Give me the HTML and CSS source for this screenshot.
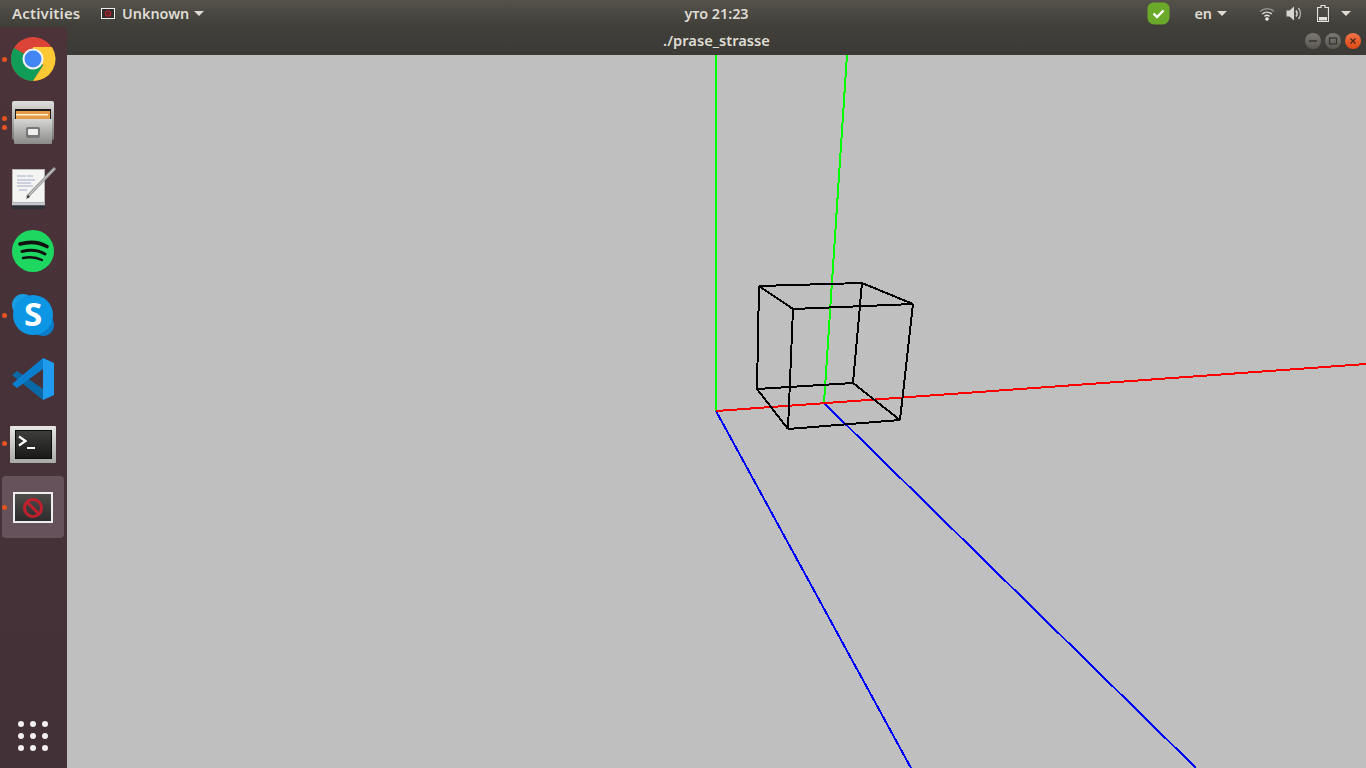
FILE: index.html
```html
<!DOCTYPE html>
<html lang="en">

<head>
    <meta charset="UTF-8">
    <meta name="viewport" content="width=device-width, initial-scale=1.0">
    <title>./prase_strasse</title>
    <link rel="stylesheet" href="styles.css">
</head>

<body>
    <header class="topbar">
        <div class="topbar-left">
            <span class="activities">Activities</span>
            <div class="app-menu">
                <svg class="app-menu-icon" width="14" height="11" viewBox="0 0 14 11">
                    <rect x="0.5" y="0.5" width="13" height="10" fill="#2e2c2c" stroke="#eee"/>
                    <circle cx="7" cy="5.5" r="2.6" fill="none" stroke="#b3202c" stroke-width="1.3"/>
                    <path d="M5.2 3.7l3.6 3.6" stroke="#b3202c" stroke-width="1"/>
                </svg>
                <span>Unknown</span>
                <span class="caret"></span>
            </div>
        </div>
        <div class="clock">уто 21:23</div>
        <div class="topbar-right">
            <svg class="tray-check" width="23" height="23" viewBox="0 0 23 23">
                <path d="M7 0.5h9c4 0 6.5 2.5 6.5 6v8c0 5-3 8-7.500 8h-7c-5 0-7.500-3-7.500-7v-9c0-3.500 3-6 6.500-6z" fill="#6aa92a"/>
                <path d="M6.500 11.500l3.500 3.500 6.500-6.500" fill="none" stroke="#fff" stroke-width="2.400"/>
            </svg>
            <div class="lang">
                <span>en</span>
                <span class="caret"></span>
            </div>
            <svg class="tray-wifi" width="16" height="14" viewBox="0 0 16 14">
                <path d="M1 4.500c4-3.800 10-3.800 14 0" fill="none" stroke="#8f8d87" stroke-width="1.500"/>
                <path d="M3.200 7c2.800-2.500 6.800-2.500 9.600 0" fill="none" stroke="#d8d6d0" stroke-width="1.500"/>
                <path d="M5.500 9.300c1.500-1.200 3.500-1.200 5 0" fill="none" stroke="#e8e6e0" stroke-width="1.500"/>
                <circle cx="8" cy="12" r="1.800" fill="#f0eee8"/>
            </svg>
            <svg class="tray-volume" width="16" height="15" viewBox="0 0 16 15">
                <path d="M0.500 4.500h3l4.500-4v14l-4.500-4h-3z" fill="#d8d6d0"/>
                <path d="M10 4.500c1.300 1.800 1.300 4.200 0 6" fill="none" stroke="#d8d6d0" stroke-width="1.500"/>
                <path d="M12.500 2c2.400 3.200 2.400 7.800 0 11" fill="none" stroke="#b8b6b0" stroke-width="1.500"/>
            </svg>
            <svg class="tray-battery" width="12" height="17" viewBox="0 0 12 17">
                <path d="M4 0.500h4v2h3.500v14h-11v-14h3.500z" fill="none" stroke="#e4e2dc" stroke-width="1.200"/>
                <rect x="2" y="12" width="8" height="3.500" fill="#e4e2dc"/>
            </svg>
            <span class="caret"></span>
        </div>
    </header>

    <div class="desktop">
        <nav class="dock">
            <div class="dock-item">
                <span class="pip pip-one"></span>
                <svg width="62" height="62" viewBox="0 0 62 62">
                    <circle cx="31" cy="31" r="22" fill="#db4437"/>
                    <path d="M12 20A22 22 0 0 0 31 53L41.400 37 20.600 25z" fill="#0f9d58"/>
                    <path d="M31 19H50A22 22 0 0 1 31 53L41.400 37 31 31z" fill="#fcc934"/>
                    <circle cx="31" cy="31" r="10.500" fill="#f1f3f4"/>
                    <circle cx="31" cy="31" r="8.500" fill="#4285f4"/>
                </svg>
            </div>
            <div class="dock-item">
                <span class="pip pip-top"></span>
                <span class="pip pip-bottom"></span>
                <svg width="62" height="62" viewBox="0 0 62 62">
                    <defs>
                        <linearGradient id="cabinet" x1="0" y1="0" x2="0" y2="1">
                            <stop offset="0" stop-color="#d6d6d4"/>
                            <stop offset="1" stop-color="#8a8a88"/>
                        </linearGradient>
                        <linearGradient id="cabinet-top" x1="0" y1="0" x2="0" y2="1">
                            <stop offset="0" stop-color="#dededc"/>
                            <stop offset="1" stop-color="#77777a"/>
                        </linearGradient>
                    </defs>
                    <rect x="10" y="9" width="42" height="39" rx="2" fill="url(#cabinet-top)"/>
                    <rect x="13" y="17" width="36" height="10" fill="#1e1c1a"/>
                    <rect x="14" y="19" width="34" height="8" fill="#e59a45"/>
                    <rect x="14" y="22" width="32" height="1.500" fill="#fff0d8"/>
                    <rect x="12" y="27" width="38" height="25" rx="1" fill="url(#cabinet)"/>
                    <rect x="24" y="35" width="14" height="11" rx="2" fill="#77777a"/>
                    <rect x="26" y="37" width="10" height="6" rx="1" fill="#eeeeec"/>
                </svg>
            </div>
            <div class="dock-item">
                <svg width="62" height="62" viewBox="0 0 62 62">
                    <rect x="10.500" y="13.500" width="32" height="33" fill="#f4f4f2" stroke="#b5b5b8"/>
                    <rect x="10" y="47" width="33" height="2.500" fill="#c8c9d0"/>
                    <rect x="10" y="49.500" width="33" height="3.500" fill="#30323a"/>
                    <path d="M15 20h9M25 20h6M15 24h18M15 27h14M15 30h16M17 34h8" stroke="#a3abca" stroke-width="1"/>
                    <path d="M53 12L25 41" stroke="#9c9c9c" stroke-width="3.200"/>
                    <path d="M52 13L27 39" stroke="#d2d2d2" stroke-width="1"/>
                    <path d="M24 43l2-4 2 2z" fill="#333"/>
                </svg>
            </div>
            <div class="dock-item">
                <svg width="62" height="62" viewBox="0 0 62 62">
                    <circle cx="31" cy="31" r="21" fill="#1ed760"/>
                    <path d="M18 24c9-2.500 19-2 27 2.500" fill="none" stroke="#111" stroke-width="3.600" stroke-linecap="round"/>
                    <path d="M20 31.500c8-2 16-1.500 23 2.500" fill="none" stroke="#111" stroke-width="3" stroke-linecap="round"/>
                    <path d="M21 38c7-1.500 13-1 19 2" fill="none" stroke="#111" stroke-width="2.500" stroke-linecap="round"/>
                </svg>
            </div>
            <div class="dock-item">
                <span class="pip pip-one"></span>
                <svg width="62" height="62" viewBox="0 0 62 62">
                    <circle cx="21" cy="21" r="11" fill="#1b9de2"/>
                    <circle cx="41" cy="41" r="11" fill="#0a7cc8"/>
                    <circle cx="31" cy="31" r="20" fill="#0d96e4"/>
                    <text class="skype-s" x="31" y="42" text-anchor="middle">S</text>
                </svg>
            </div>
            <div class="dock-item">
                <svg width="62" height="62" viewBox="0 0 62 62">
                    <path d="M41 52V41L15 23 10 27z" fill="#0a68a6"/>
                    <path d="M41 10V21L15 40 10 36z" fill="#0b7fcd"/>
                    <path d="M41 10L52 15V47L41 52z" fill="#1f9cf0"/>
                </svg>
            </div>
            <div class="dock-item">
                <span class="pip pip-one"></span>
                <svg width="62" height="62" viewBox="0 0 62 62">
                    <defs>
                        <linearGradient id="term" x1="0" y1="0" x2="0" y2="1">
                            <stop offset="0" stop-color="#3e3e3c"/>
                            <stop offset="1" stop-color="#191918"/>
                        </linearGradient>
                        <linearGradient id="term-frame" x1="0" y1="0" x2="0" y2="1">
                            <stop offset="0" stop-color="#e6e6e4"/>
                            <stop offset="1" stop-color="#a9a9a7"/>
                        </linearGradient>
                    </defs>
                    <rect x="8" y="14" width="46" height="37" rx="1" fill="url(#term-frame)"/>
                    <rect x="13.500" y="18.500" width="36" height="28" fill="url(#term)" stroke="#0c0c0c"/>
                    <path d="M17 24.500l6.500 4.500-6.500 4.500" fill="none" stroke="#fff" stroke-width="2.200"/>
                    <rect x="25" y="35" width="8" height="2" fill="#fff"/>
                </svg>
            </div>
            <div class="dock-item dock-item-active">
                <span class="pip pip-one"></span>
                <svg width="62" height="62" viewBox="0 0 62 62">
                    <defs>
                        <linearGradient id="blocked" x1="0" y1="0" x2="0" y2="1">
                            <stop offset="0" stop-color="#504d4d"/>
                            <stop offset="1" stop-color="#2b2929"/>
                        </linearGradient>
                    </defs>
                    <rect x="12" y="17" width="38" height="29" fill="url(#blocked)" stroke="#eeeeee" stroke-width="2"/>
                    <circle cx="31" cy="32" r="8.500" fill="none" stroke="#c0202e" stroke-width="3"/>
                    <path d="M25 26l12 12" stroke="#c0202e" stroke-width="3"/>
                </svg>
            </div>
            <div class="show-apps">
                <span></span><span></span><span></span>
                <span></span><span></span><span></span>
                <span></span><span></span><span></span>
            </div>
        </nav>

        <main class="window">
            <div class="titlebar">
                <span class="title">./prase_strasse</span>
                <div class="win-buttons">
                    <span class="win-btn"><svg width="16" height="16" viewBox="0 0 16 16"><path d="M4 8h8" stroke="#35342f" stroke-width="1.500"/></svg></span>
                    <span class="win-btn"><svg width="16" height="16" viewBox="0 0 16 16"><rect x="4.500" y="5" width="7" height="6" fill="none" stroke="#35342f" stroke-width="1.200"/></svg></span>
                    <span class="win-btn win-close"><svg width="16" height="16" viewBox="0 0 16 16"><path d="M5.500 5.500l5 5M10.500 5.500l-5 5" stroke="#4a2a14" stroke-width="1.300"/></svg></span>
                </div>
            </div>
            <!-- coordinates are relative to the canvas: x - 67, y - 55 -->
            <svg class="scene" width="1299" height="713" viewBox="0 0 1299 713">
                <g stroke-width="2" shape-rendering="crispEdges">
                    <line x1="649" y1="0" x2="649" y2="356" stroke="#00ff00"/>
                    <line x1="780" y1="0" x2="757" y2="348" stroke="#00ff00"/>
                    <line x1="649" y1="356" x2="844" y2="713" stroke="#0000ff"/>
                    <line x1="757" y1="348" x2="1129" y2="713" stroke="#0000ff"/>
                    <line x1="649" y1="356" x2="1299" y2="309" stroke="#ff0000"/>
                </g>
                <g stroke="#000" stroke-width="2" shape-rendering="crispEdges">
                    <line x1="692" y1="231" x2="795" y2="228"/>
                    <line x1="795" y1="228" x2="846" y2="249"/>
                    <line x1="846" y1="249" x2="726" y2="254"/>
                    <line x1="726" y1="254" x2="692" y2="231"/>
                    <line x1="690" y1="334" x2="786" y2="328"/>
                    <line x1="786" y1="328" x2="833" y2="365"/>
                    <line x1="833" y1="365" x2="721" y2="374"/>
                    <line x1="721" y1="374" x2="690" y2="334"/>
                    <line x1="692" y1="231" x2="690" y2="334"/>
                    <line x1="795" y1="228" x2="786" y2="328"/>
                    <line x1="846" y1="249" x2="833" y2="365"/>
                    <line x1="726" y1="254" x2="721" y2="374"/>
                </g>
            </svg>
        </main>
    </div>
</body>

</html>
```

FILE: styles.css
```css
html,
body {
    margin: 0;
    padding: 0;
    height: 100%;
    overflow: hidden;
}

body {
    display: flex;
    flex-direction: column;
    font-family: "Noto Sans", "Open Sans", sans-serif;
    font-size: 14.4px;
    font-weight: 600;
    color: #dfdbd2;
    background-color: #bfbfbf;
}

.topbar {
    height: 27px;
    display: flex;
    align-items: center;
    background: linear-gradient(#55524b, #3f3e39);
    flex-shrink: 0;
}

.topbar-left {
    width: 650px;
    display: flex;
    align-items: center;
    padding-left: 12px;
    box-sizing: border-box;
}

.activities {
    width: 89px;
    font-size: 15px;
    line-height: 18px;
    padding-bottom: 2px;
    letter-spacing: 0.15px;
}

.app-menu {
    display: flex;
    align-items: center;
}

.app-menu-icon {
    margin-right: 7px;
}

.caret {
    display: inline-block;
    width: 0;
    height: 0;
    border-left: 5px solid transparent;
    border-right: 5px solid transparent;
    border-top: 5px solid #dfdbd2;
    margin-left: 5px;
}

.clock {
    width: 133px;
    text-align: center;
}

.topbar-right {
    flex: 1;
    display: flex;
    align-items: center;
    padding-right: 15px;
    justify-content: flex-end;
}

.tray-check {
    margin-right: 24px;
}

.lang {
    display: flex;
    align-items: center;
    margin-right: 32px;
}

.tray-wifi {
    margin-right: 11px;
}

.tray-volume {
    margin-right: 15px;
}

.tray-battery {
    margin-right: 7px;
}

.desktop {
    flex: 1;
    display: flex;
    min-height: 0;
}

.dock {
    width: 67px;
    flex-shrink: 0;
    box-sizing: border-box;
    padding: 1px 3px 17px 2px;
    display: flex;
    flex-direction: column;
    gap: 2px;
    background: linear-gradient(#4b3339, #433138);
}

.dock-item {
    position: relative;
    width: 62px;
    height: 62px;
    border-radius: 4px;
}

.dock-item svg {
    display: block;
}

.dock-item-active {
    background-color: #66525a;
}

.pip {
    position: absolute;
    left: 0;
    width: 5px;
    height: 5px;
    border-radius: 50%;
    background-color: #e95420;
}

.pip-one {
    top: 29px;
}

.pip-top {
    top: 24px;
}

.pip-bottom {
    top: 33px;
}

.skype-s {
    font-family: "Noto Sans", sans-serif;
    font-size: 33px;
    font-weight: 700;
    fill: #fff;
}

.show-apps {
    margin-top: auto;
    margin-left: 16px;
    display: grid;
    grid-template-columns: repeat(3, 6px);
    grid-auto-rows: 6px;
    gap: 6px;
}

.show-apps span {
    border-radius: 50%;
    background-color: #f2eff0;
}

.window {
    flex: 1;
    display: flex;
    flex-direction: column;
    min-width: 0;
}

.titlebar {
    position: relative;
    height: 28px;
    box-sizing: border-box;
    padding-bottom: 2px;
    flex-shrink: 0;
    display: flex;
    align-items: center;
    justify-content: center;
    background: linear-gradient(#403f3a, #3b3a36);
}

.title {
    font-size: 14.7px;
}

.win-buttons {
    position: absolute;
    right: 5px;
    top: 6px;
    display: flex;
    gap: 4px;
}

.win-btn {
    width: 16px;
    height: 16px;
    border-radius: 50%;
    background: linear-gradient(#7c7a73, #59574f);
}

.win-btn svg {
    display: block;
}

.win-close {
    background: linear-gradient(#f0734a, #dd4814);
}

.scene {
    display: block;
    background-color: #bfbfbf;
}
```
